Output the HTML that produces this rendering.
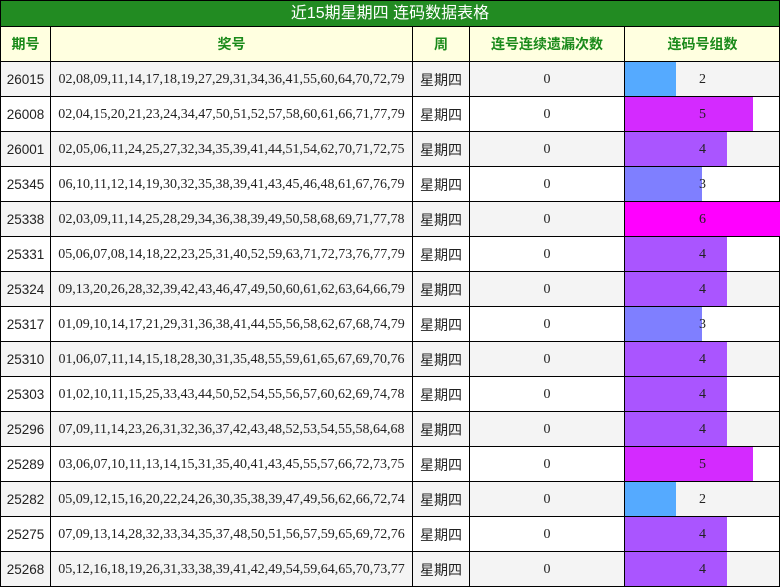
<!DOCTYPE html>
<html><head><meta charset="utf-8"><style>
*{margin:0;padding:0;box-sizing:border-box}
body{width:780px;height:587px;background:#fff;overflow:hidden;position:relative;font-family:"Liberation Serif","Noto Sans CJK SC",serif;font-size:14px;color:#222}
.t{position:absolute;left:0;top:0;width:780px;height:27px;background:#228B22;border:1px solid #000;color:#fff;font-family:"Liberation Sans","Noto Sans CJK SC",sans-serif;font-size:16px;text-align:center;line-height:25px}
.r{position:absolute;left:0;width:780px;height:36px;border:1px solid #000;border-top:1px solid #000}
.c{position:absolute;top:0;height:34px;line-height:35px;text-align:center;border-right:1px solid #000;overflow:hidden}
.h .c{color:#1a8a1a;font-weight:bold;font-family:"Liberation Sans","Noto Sans CJK SC",sans-serif;line-height:34px}
.h{background:#ffffe0}
.g{background:#f4f4f4}
.c0{left:0;width:50px;font-family:"Liberation Sans","Noto Sans CJK SC",sans-serif;font-size:13.5px}
.c1{left:50px;width:362px}
.c2{left:412px;width:57px;font-family:"Liberation Sans","Noto Sans CJK SC",sans-serif;line-height:37px}
.c3{left:469px;width:155px}
.c4{left:624px;width:155px;border-right:none}
.b{position:absolute;left:0;top:0;height:34px}
.n{position:relative}
</style></head><body>
<div class="t">近15期星期四 连码数据表格</div>
<div class="r h" style="top:26px"><div class="c c0" style="font-size:14px">期号</div><div class="c c1">奖号</div><div class="c c2" style="line-height:34px">周</div><div class="c c3">连号连续遗漏次数</div><div class="c c4">连码号组数</div></div>
<div id="rows"></div>
<script>
var d=[["26015","02,08,09,11,14,17,18,19,27,29,31,34,36,41,55,60,64,70,72,79",2],
["26008","02,04,15,20,21,23,24,34,47,50,51,52,57,58,60,61,66,71,77,79",5],
["26001","02,05,06,11,24,25,27,32,34,35,39,41,44,51,54,62,70,71,72,75",4],
["25345","06,10,11,12,14,19,30,32,35,38,39,41,43,45,46,48,61,67,76,79",3],
["25338","02,03,09,11,14,25,28,29,34,36,38,39,49,50,58,68,69,71,77,78",6],
["25331","05,06,07,08,14,18,22,23,25,31,40,52,59,63,71,72,73,76,77,79",4],
["25324","09,13,20,26,28,32,39,42,43,46,47,49,50,60,61,62,63,64,66,79",4],
["25317","01,09,10,14,17,21,29,31,36,38,41,44,55,56,58,62,67,68,74,79",3],
["25310","01,06,07,11,14,15,18,28,30,31,35,48,55,59,61,65,67,69,70,76",4],
["25303","01,02,10,11,15,25,33,43,44,50,52,54,55,56,57,60,62,69,74,78",4],
["25296","07,09,11,14,23,26,31,32,36,37,42,43,48,52,53,54,55,58,64,68",4],
["25289","03,06,07,10,11,13,14,15,31,35,40,41,43,45,55,57,66,72,73,75",5],
["25282","05,09,12,15,16,20,22,24,26,30,35,38,39,47,49,56,62,66,72,74",2],
["25275","07,09,13,14,28,32,33,34,35,37,48,50,51,56,57,59,65,69,72,76",4],
["25268","05,12,16,18,19,26,31,33,38,39,41,42,49,54,59,64,65,70,73,77",4]];
var col={2:"#55aaff",3:"#7f7fff",4:"#aa55ff",5:"#d42aff",6:"#ff00ff"};
var h="";
d.forEach(function(r,i){
h+='<div class="r'+(i%2==0?' g':'')+'" style="top:'+(61+i*35)+'px"><div class="c c0">'+r[0]+'</div><div class="c c1">'+r[1]+'</div><div class="c c2">星期四</div><div class="c c3">0</div><div class="c c4"><div class="b" style="width:'+(r[2]==6?155:Math.round(r[2]*25.5))+'px;background:'+col[r[2]]+'"></div><span class="n">'+r[2]+'</span></div></div>';
});
document.getElementById("rows").innerHTML=h;
</script>
</body></html>
